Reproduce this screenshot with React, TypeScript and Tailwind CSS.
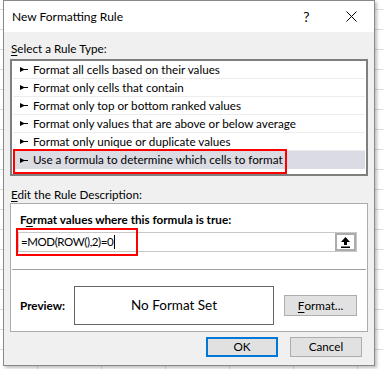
import React from "react";

const RULES = [
  "Format all cells based on their values",
  "Format only cells that contain",
  "Format only top or bottom ranked values",
  "Format only values that are above or below average",
  "Format only unique or duplicate values",
  "Use a formula to determine which cells to format",
];

function RuleArrow() {
  return (
    <svg width="8" height="5" viewBox="0 0 8 5" className="shrink-0">
      <path d="M0 0 L4 2 L8 2 L8 3 L4 3 L0 5 Z" fill="#000" />
    </svg>
  );
}

function UpArrow() {
  return (
    <svg width="9" height="11" viewBox="0 0 9 11">
      <path d="M4.5 0 L9 5 L6 5 L6 8 L3 8 L3 5 L0 5 Z" fill="#000" />
      <rect x="0" y="9.5" width="9" height="1.5" fill="#000" />
    </svg>
  );
}

export default function App() {
  return (
    <div
      className="relative h-[369px] w-[383px] overflow-hidden bg-white bg-[linear-gradient(#dadada_1px,transparent_1px),linear-gradient(90deg,#dadada_1px,transparent_1px)] bg-[size:64px_20px] bg-[position:37px_9px] pl-[3px] text-[11.7px] text-black"
      style={{ fontFamily: "Lato, 'Noto Sans', sans-serif" }}
    >
      <div className="flex h-[366px] w-[372px] flex-col border border-[#8a8a8a] bg-[#f0f0f0] shadow-[2px_2px_3px_rgba(0,0,0,0.25)]">
        {/* title bar */}
        <div className="flex h-[31px] items-center bg-white">
          <span className="pl-[8px] text-[12px]">New Formatting Rule</span>
          <div className="ml-auto flex h-full">
            <div className="flex w-[45px] items-center justify-center text-[14px]">?</div>
            <div className="flex w-[45px] items-center justify-center">
              <svg width="11" height="11" viewBox="0 0 11 11">
                <path d="M0.5 0.5 L10.5 10.5 M10.5 0.5 L0.5 10.5" stroke="#000" strokeWidth="1" />
              </svg>
            </div>
          </div>
        </div>

        <div className="flex flex-col px-[6px] pt-[8px]">
          <div className="h-[16px] pl-[1px] leading-[16px]">
            <span className="underline underline-offset-2">S</span>elect a Rule Type:
          </div>

          {/* rule list */}
          <div className="relative mt-[3px] h-[117px] border-2 border-[#7f7f7f] bg-white px-[1px]">
            {RULES.map((rule, i) => (
              <div
                key={rule}
                className={
                  i === RULES.length - 1
                    ? "flex h-[18px] items-center gap-[5px] bg-[#dadbe3] pl-[7px]"
                    : "flex h-[18px] items-center gap-[5px] border-b border-[#ececec] pl-[7px]"
                }
              >
                <RuleArrow />
                <span className="leading-none">{rule}</span>
              </div>
            ))}
            <div className="absolute left-[1px] top-[88px] h-[25px] w-[274px] border-2 border-[#ff0000]" />
          </div>

          <div className="mt-[10px] h-[16px] pl-[1px] leading-[16px]">
            <span className="underline underline-offset-2">E</span>dit the Rule Description:
          </div>

          {/* rule description */}
          <div className="mt-[1px] flex h-[129px] flex-col border border-[#acacac] bg-white">
            <div className="box-content h-[16px] pl-[9px] pt-[7px] font-bold leading-[16px]">
              F<span className="underline underline-offset-2">o</span>rmat values where this formula is true:
            </div>
            <div className="relative ml-[7px] mr-[10px] mt-[5px] flex h-[20px] border border-[#c8c8c8] bg-white">
              <div className="flex flex-1 items-center pl-[2px]">
                <span className="text-[11.5px] tracking-[-0.4px]">=MOD(ROW(),2)=0</span>
                <span className="ml-[1px] h-[14px] w-px bg-black" />
              </div>
              <div className="flex w-[21px] items-center justify-center border-2 border-[#acacac] bg-white">
                <UpArrow />
              </div>
              <div className="absolute -left-[3px] -top-[5px] h-[28px] w-[122px] border-2 border-[#ff0000]" />
            </div>
            <div className="mx-[1px] mt-[17px] h-px bg-[#a0a0a0]" />
            <div className="mt-[16px] flex items-center">
              <span className="w-[63px] pl-[9px] font-bold">Preview:</span>
              <div className="flex h-[39px] w-[200px] items-center justify-center border border-[#646464] text-[13.5px]">
                No Format Set
              </div>
              <div className="ml-[10px] flex h-[21px] w-[73px] items-center justify-center border border-[#adadad] bg-[#e1e1e1]">
                <span className="underline underline-offset-2">F</span>ormat...
              </div>
            </div>
          </div>

          {/* buttons */}
          <div className="mt-[5px] flex justify-end gap-[12px] pr-[6px]">
            <div className="flex h-[20px] w-[72px] items-center justify-center border-2 border-[#0078d7] bg-[#e1e1e1]">
              OK
            </div>
            <div className="flex h-[20px] w-[72px] items-center justify-center border border-[#adadad] bg-[#e1e1e1]">
              Cancel
            </div>
          </div>
        </div>
      </div>
    </div>
  );
}
